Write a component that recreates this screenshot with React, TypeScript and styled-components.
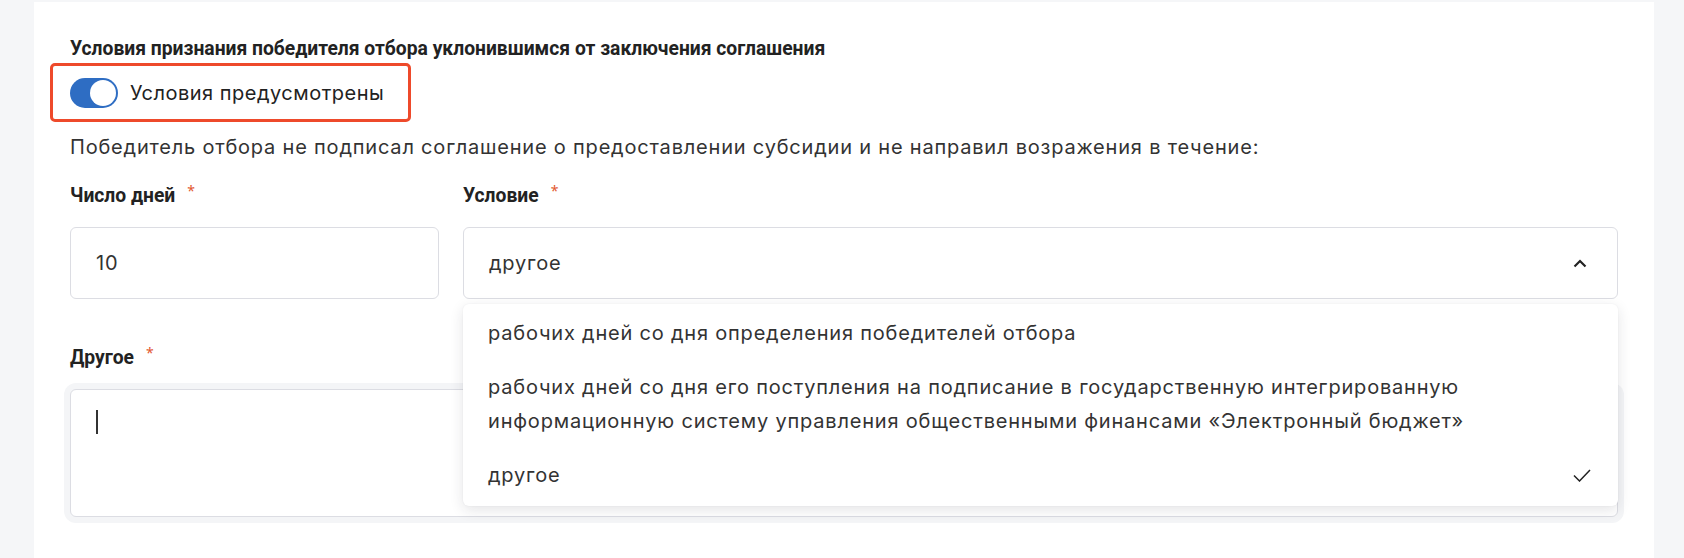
import React from "react";
import styled, { createGlobalStyle } from "styled-components";

const GlobalStyle = createGlobalStyle`
  html, body {
    margin: 0;
    padding: 0;
    background: #f5f6f8;
  }
  body {
    font-family: Inter, "Noto Sans", sans-serif;
    color: #2b2b2b;
  }
`;

const Page = styled.div`
  height: 558px;
  padding: 2px 30px 0 34px;
  box-sizing: border-box;
  overflow: hidden;
`;

const Card = styled.section`
  height: 100%;
  background: #fff;
  padding: 35px 36px 0;
  box-sizing: border-box;
  display: flex;
  flex-direction: column;
  align-items: flex-start;
`;

const Title = styled.h3`
  margin: 0;
  font: 700 19.3px/24px Roboto, "Noto Sans", sans-serif;
  color: #222;
`;

const SwitchRow = styled.label`
  margin: 2px 0 0 -20px;
  height: 59px;
  box-sizing: border-box;
  border: 3px solid #ee4a2b;
  border-radius: 5px;
  padding: 0 24px 0 17px;
  display: inline-flex;
  align-items: center;
  gap: 12px;
  font-size: 20px;
  letter-spacing: 0.5px;
  color: #222;
`;

const Switch = styled.span<{ $on: boolean }>`
  position: relative;
  width: 48px;
  height: 30px;
  border-radius: 15px;
  background: ${(p) => (p.$on ? "#2e6dc3" : "#c9ccd3")};
  flex-shrink: 0;

  &::after {
    content: "";
    position: absolute;
    top: 2px;
    left: ${(p) => (p.$on ? "20px" : "2px")};
    width: 26px;
    height: 26px;
    border-radius: 50%;
    background: #fff;
  }
`;

const Description = styled.p`
  margin: 11px 0 0;
  font-size: 20px;
  line-height: 28px;
  letter-spacing: 0.8px;
  color: #333;
`;

const FieldsRow = styled.div`
  margin-top: 23px;
  width: 100%;
  display: grid;
  grid-template-columns: 369px 1fr;
  gap: 24px;
`;

const Field = styled.div<{ $top?: number }>`
  width: 100%;
  margin-top: ${(p) => p.$top ?? 0}px;
  display: flex;
  flex-direction: column;
  gap: 19px;
`;

const Label = styled.span`
  font: 700 19.3px/24px Roboto, "Noto Sans", sans-serif;
  color: #222;
`;

const Req = styled.span`
  margin-left: 12px;
  font: 400 14px/14px "Noto Sans", sans-serif;
  color: #e2572f;
  vertical-align: top;
`;

const Control = styled.div`
  position: relative;
  height: 72px;
  box-sizing: border-box;
  border: 1px solid #dcdde3;
  border-radius: 6px;
  background: #fff;
  padding: 0 30px 0 25px;
  display: flex;
  align-items: center;
  justify-content: space-between;
  font-size: 20px;
  letter-spacing: 0.8px;
  color: #333;
`;

const Dropdown = styled.ul`
  position: absolute;
  top: calc(100% + 6px);
  left: -1px;
  right: -1px;
  z-index: 2;
  margin: 0;
  padding: 2px 0 4px;
  list-style: none;
  background: #fff;
  border-radius: 6px;
  box-shadow: 0 4px 14px rgba(30, 35, 50, 0.12), 0 0 2px rgba(30, 35, 50, 0.06);
`;

const Option = styled.li`
  padding: 10px 27px 10px 25px;
  display: flex;
  align-items: center;
  justify-content: space-between;
  gap: 24px;
  font-size: 20px;
  line-height: 34px;
  letter-spacing: 0.8px;
  color: #333;
`;

const OptionText = styled.span`
  max-width: 1010px;
`;

const TextArea = styled.div`
  height: 128px;
  box-sizing: border-box;
  border: 1px solid #dcdde3;
  border-radius: 6px;
  box-shadow: 0 0 0 6px #f4f5f7;
  background: #fff;
  padding: 20px 25px;
`;

const Caret = styled.span`
  display: block;
  width: 2px;
  height: 24px;
  background: #333;
`;

const ChevronUp = () => (
  <svg width="14" height="9" viewBox="0 0 14 9" fill="none">
    <polyline points="1.5,7.5 7,2 12.5,7.5" stroke="#222" strokeWidth="2.2" />
  </svg>
);

const Check = () => (
  <svg width="18" height="13" viewBox="0 0 18 13" fill="none">
    <polyline points="1,6.5 6.5,12 17,1" stroke="#222" strokeWidth="1.5" />
  </svg>
);

const options = [
  "рабочих дней со дня определения победителей отбора",
  "рабочих дней со дня его поступления на подписание в государственную интегрированную информационную систему управления общественными финансами «Электронный бюджет»",
  "другое",
];

export default function App() {
  const selected = "другое";
  return (
    <>
      <GlobalStyle />
      <Page>
        <Card>
          <Title>Условия признания победителя отбора уклонившимся от заключения соглашения</Title>
          <SwitchRow>
            <Switch $on />
            Условия предусмотрены
          </SwitchRow>
          <Description>
            Победитель отбора не подписал соглашение о предоставлении субсидии и не направил
            возражения в течение:
          </Description>
          <FieldsRow>
            <Field>
              <Label>
                Число дней<Req>*</Req>
              </Label>
              <Control>10</Control>
            </Field>
            <Field>
              <Label>
                Условие<Req>*</Req>
              </Label>
              <Control>
                {selected}
                <ChevronUp />
                <Dropdown>
                  {options.map((o) => (
                    <Option key={o}>
                      <OptionText>{o}</OptionText>
                      {o === selected && <Check />}
                    </Option>
                  ))}
                </Dropdown>
              </Control>
            </Field>
          </FieldsRow>
          <Field $top={47}>
            <Label>
              Другое<Req>*</Req>
            </Label>
            <TextArea>
              <Caret />
            </TextArea>
          </Field>
        </Card>
      </Page>
    </>
  );
}
